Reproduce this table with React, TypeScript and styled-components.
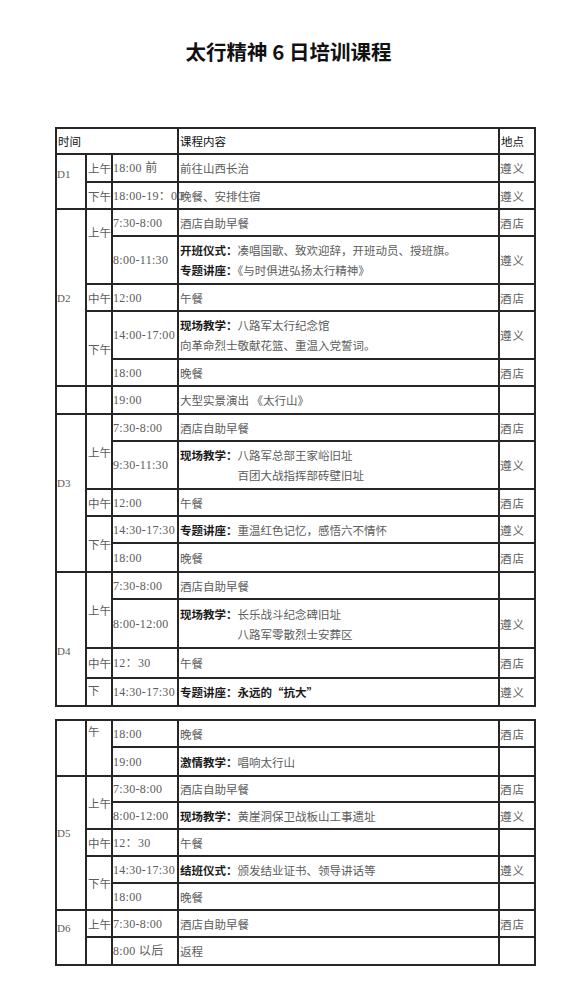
import styled, { createGlobalStyle, css } from "styled-components";

const GlobalStyle = createGlobalStyle`
  body {
    margin: 0;
    background: #fff;
    font-family: "Liberation Serif", "Noto Sans CJK SC", serif;
  }
`;

const Page = styled.div`
  width: 577px;
  padding-top: 37px;
  padding-bottom: 30px;
`;

const Title = styled.h1`
  margin: 0 0 62px;
  text-align: center;
  font-family: "Noto Sans CJK SC", sans-serif;
  font-size: 20.5px;
  line-height: 28px;
  font-weight: 700;
  color: #111;
`;

const Schedule = styled.table<{ $gap?: number }>`
  margin-left: 55px;
  margin-top: ${(p) => p.$gap ?? 0}px;
  width: 479px;
  border-collapse: collapse;
  table-layout: fixed;
  font-size: 11.5px;
  color: #5c5c5c;
`;

const Row = styled.tr<{ $h: number }>`
  height: ${(p) => p.$h}px;
`;

type CellProps = { $top?: boolean; $shift?: number };

const Cell = styled.td<CellProps>`
  border: 2px solid #262626;
  padding: 0 1px;
  line-height: 20px;
  white-space: nowrap;
  overflow: visible;
  vertical-align: ${(p) => (p.$top ? "top" : "middle")};
  ${(p) =>
    p.$shift && p.$shift < 0
      ? css`padding-bottom: ${-p.$shift * 2}px;`
      : p.$shift
      ? css`padding-top: ${p.$shift * 2}px;`
      : ""}
`;

const HeadCell = styled(Cell).attrs({ as: "th" })`
  text-align: left;
  font-weight: 400;
  color: #111;
  font-family: "Noto Sans CJK SC", sans-serif;
`;

const DayCell = styled(Cell)`
  font-size: 11px;
  padding-left: 0;
`;

const PeriodCell = styled(Cell)`
  font-family: "Noto Sans CJK SC", sans-serif;
`;

const TimeCell = styled(Cell)`
  font-size: 12px;
  letter-spacing: 0.3px;
  padding-left: 0;
`;

const TopicCell = styled(Cell)`
  font-family: "Noto Sans CJK SC", sans-serif;
  padding-left: 1px;
`;

const PlaceCell = styled(Cell)`
  font-family: "Noto Sans CJK SC", sans-serif;
  letter-spacing: 1px;
  padding-left: 0;
`;

const Label = styled.b`
  font-weight: 700;
  color: #1a1a1a;
`;

const Line = styled.div<{ $indent?: boolean }>`
  padding-left: ${(p) => (p.$indent ? "5em" : "0")};
`;

const Cols = () => (
  <colgroup>
    <col style={{ width: 30 }} />
    <col style={{ width: 26 }} />
    <col style={{ width: 66 }} />
    <col style={{ width: 321 }} />
    <col style={{ width: 36 }} />
  </colgroup>
);

export default function App() {
  return (
    <Page>
      <GlobalStyle />
      <Title>太行精神 6 日培训课程</Title>

      <Schedule>
        <Cols />
        <tbody>
          <Row $h={26}>
            <HeadCell colSpan={3}>时间</HeadCell>
            <HeadCell>课程内容</HeadCell>
            <HeadCell>地点</HeadCell>
          </Row>

          <Row $h={28}>
            <DayCell rowSpan={2} $shift={-8}>D1</DayCell>
            <PeriodCell>上午</PeriodCell>
            <TimeCell>18:00 前</TimeCell>
            <TopicCell>前往山西长治</TopicCell>
            <PlaceCell>遵义</PlaceCell>
          </Row>
          <Row $h={27}>
            <PeriodCell>下午</PeriodCell>
            <TimeCell>18:00-19：00</TimeCell>
            <TopicCell>晚餐、安排住宿</TopicCell>
            <PlaceCell>遵义</PlaceCell>
          </Row>

          <Row $h={27}>
            <DayCell rowSpan={5}>D2</DayCell>
            <PeriodCell rowSpan={2} $shift={-15}>上午</PeriodCell>
            <TimeCell>7:30-8:00</TimeCell>
            <TopicCell>酒店自助早餐</TopicCell>
            <PlaceCell>酒店</PlaceCell>
          </Row>
          <Row $h={48}>
            <TimeCell>8:00-11:30</TimeCell>
            <TopicCell>
              <Line>
                <Label>开班仪式：</Label>凑唱国歌、致欢迎辞，开班动员、授班旗。
              </Line>
              <Line>
                <Label>专题讲座：</Label>《与时俱进弘扬太行精神》
              </Line>
            </TopicCell>
            <PlaceCell>遵义</PlaceCell>
          </Row>
          <Row $h={27}>
            <PeriodCell>中午</PeriodCell>
            <TimeCell>12:00</TimeCell>
            <TopicCell>午餐</TopicCell>
            <PlaceCell>酒店</PlaceCell>
          </Row>
          <Row $h={48}>
            <PeriodCell rowSpan={2}>下午</PeriodCell>
            <TimeCell>14:00-17:00</TimeCell>
            <TopicCell>
              <Line>
                <Label>现场教学：</Label>八路军太行纪念馆
              </Line>
              <Line>向革命烈士敬献花篮、重温入党誓词。</Line>
            </TopicCell>
            <PlaceCell>遵义</PlaceCell>
          </Row>
          <Row $h={27}>
            <TimeCell>18:00</TimeCell>
            <TopicCell>晚餐</TopicCell>
            <PlaceCell>酒店</PlaceCell>
          </Row>

          <Row $h={28}>
            <DayCell />
            <PeriodCell />
            <TimeCell>19:00</TimeCell>
            <TopicCell>大型实景演出 《太行山》</TopicCell>
            <PlaceCell />
          </Row>

          <Row $h={27}>
            <DayCell rowSpan={5} $shift={-10}>D3</DayCell>
            <PeriodCell rowSpan={2}>上午</PeriodCell>
            <TimeCell>7:30-8:00</TimeCell>
            <TopicCell>酒店自助早餐</TopicCell>
            <PlaceCell>酒店</PlaceCell>
          </Row>
          <Row $h={48}>
            <TimeCell>9:30-11:30</TimeCell>
            <TopicCell>
              <Line>
                <Label>现场教学：</Label>八路军总部王家峪旧址
              </Line>
              <Line $indent>百团大战指挥部砖壁旧址</Line>
            </TopicCell>
            <PlaceCell>遵义</PlaceCell>
          </Row>
          <Row $h={27}>
            <PeriodCell>中午</PeriodCell>
            <TimeCell>12:00</TimeCell>
            <TopicCell>午餐</TopicCell>
            <PlaceCell>酒店</PlaceCell>
          </Row>
          <Row $h={27}>
            <PeriodCell rowSpan={2}>下午</PeriodCell>
            <TimeCell>14:30-17:30</TimeCell>
            <TopicCell>
              <Label>专题讲座：</Label>重温红色记忆，感悟六不情怀
            </TopicCell>
            <PlaceCell>遵义</PlaceCell>
          </Row>
          <Row $h={29}>
            <TimeCell>18:00</TimeCell>
            <TopicCell>晚餐</TopicCell>
            <PlaceCell>酒店</PlaceCell>
          </Row>

          <Row $h={27}>
            <DayCell rowSpan={4} $shift={12}>D4</DayCell>
            <PeriodCell rowSpan={2}>上午</PeriodCell>
            <TimeCell>7:30-8:00</TimeCell>
            <TopicCell>酒店自助早餐</TopicCell>
            <PlaceCell />
          </Row>
          <Row $h={49}>
            <TimeCell>8:00-12:00</TimeCell>
            <TopicCell>
              <Line>
                <Label>现场教学：</Label>长乐战斗纪念碑旧址
              </Line>
              <Line $indent>八路军零散烈士安葬区</Line>
            </TopicCell>
            <PlaceCell>遵义</PlaceCell>
          </Row>
          <Row $h={30}>
            <PeriodCell>中午</PeriodCell>
            <TimeCell>12：30</TimeCell>
            <TopicCell>午餐</TopicCell>
            <PlaceCell>酒店</PlaceCell>
          </Row>
          <Row $h={28}>
            <PeriodCell $shift={-2}>下</PeriodCell>
            <TimeCell>14:30-17:30</TimeCell>
            <TopicCell>
              <Label>专题讲座：永远的“抗大”</Label>
            </TopicCell>
            <PlaceCell>遵义</PlaceCell>
          </Row>
        </tbody>
      </Schedule>

      <Schedule $gap={12}>
        <Cols />
        <tbody>
          <Row $h={27}>
            <DayCell rowSpan={2} />
            <PeriodCell rowSpan={2} $top>午</PeriodCell>
            <TimeCell>18:00</TimeCell>
            <TopicCell>晚餐</TopicCell>
            <PlaceCell>酒店</PlaceCell>
          </Row>
          <Row $h={29}>
            <TimeCell>19:00</TimeCell>
            <TopicCell>
              <Label>激情教学：</Label>唱响太行山
            </TopicCell>
            <PlaceCell />
          </Row>

          <Row $h={26}>
            <DayCell rowSpan={5} $shift={-10}>D5</DayCell>
            <PeriodCell rowSpan={2}>上午</PeriodCell>
            <TimeCell>7:30-8:00</TimeCell>
            <TopicCell>酒店自助早餐</TopicCell>
            <PlaceCell>酒店</PlaceCell>
          </Row>
          <Row $h={27}>
            <TimeCell>8:00-12:00</TimeCell>
            <TopicCell>
              <Label>现场教学：</Label>黄崖洞保卫战板山工事遗址
            </TopicCell>
            <PlaceCell>遵义</PlaceCell>
          </Row>
          <Row $h={27}>
            <PeriodCell>中午</PeriodCell>
            <TimeCell>12：30</TimeCell>
            <TopicCell>午餐</TopicCell>
            <PlaceCell />
          </Row>
          <Row $h={27}>
            <PeriodCell rowSpan={2}>下午</PeriodCell>
            <TimeCell>14:30-17:30</TimeCell>
            <TopicCell>
              <Label>结班仪式：</Label>颁发结业证书、领导讲话等
            </TopicCell>
            <PlaceCell>遵义</PlaceCell>
          </Row>
          <Row $h={27}>
            <TimeCell>18:00</TimeCell>
            <TopicCell>晚餐</TopicCell>
            <PlaceCell />
          </Row>

          <Row $h={27}>
            <DayCell rowSpan={2} $shift={-10}>D6</DayCell>
            <PeriodCell>上午</PeriodCell>
            <TimeCell>7:30-8:00</TimeCell>
            <TopicCell>酒店自助早餐</TopicCell>
            <PlaceCell>酒店</PlaceCell>
          </Row>
          <Row $h={28}>
            <PeriodCell />
            <TimeCell>8:00 以后</TimeCell>
            <TopicCell>返程</TopicCell>
            <PlaceCell />
          </Row>
        </tbody>
      </Schedule>
    </Page>
  );
}
